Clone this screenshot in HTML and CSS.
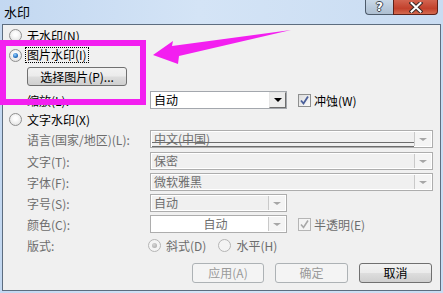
FILE: index.html
```html
<!DOCTYPE html>
<html lang="zh-CN">
<head>
    <meta charset="UTF-8">
    <title>水印</title>
    <link rel="stylesheet" href="styles.css">
</head>
<body>
    <div class="window">
        <div class="titlebar">
            <span class="title">水印</span>
            <div class="caption-buttons">
                <span class="cap-btn help">?</span>
                <span class="cap-btn close">
                    <svg width="14" height="11" viewBox="0 0 14 11">
                        <path d="M2.5 1 L11.5 9.5 M11.5 1 L2.5 9.5" stroke="#3b2a28" stroke-width="4" stroke-linecap="square"/>
                        <path d="M2.5 1 L11.5 9.5 M11.5 1 L2.5 9.5" stroke="#fff" stroke-width="2" stroke-linecap="square"/>
                    </svg>
                </span>
            </div>
        </div>

        <div class="client">
            <div class="row option first">
                <span class="radio"></span>
                <span>无水印(N)</span>
            </div>
            <div class="row option">
                <span class="radio checked"></span>
                <span class="focus">图片水印(I)</span>
            </div>
            <div class="row pick-row">
                <button class="btn pick">选择图片(P)...</button>
            </div>
            <div class="row field scale-row">
                <span class="label">缩放(L):</span>
                <div class="combo short">
                    <span class="value">自动</span>
                    <span class="drop"><i class="arrow"></i></span>
                </div>
                <span class="check checked">
                    <svg width="11" height="11" viewBox="0 0 11 11"><path d="M2 5.5 L4.5 8.5 L9 1.5" fill="none" stroke="#4a5f9a" stroke-width="1.8"/></svg>
                </span>
                <span class="check-text">冲蚀(W)</span>
            </div>
            <div class="row option text-mark">
                <span class="radio"></span>
                <span>文字水印(X)</span>
            </div>
            <div class="row field lang-row">
                <span class="label">语言(国家/地区)(L):</span>
                <div class="combo disabled">
                    <span class="value underlined">中文(中国)</span>
                    <span class="drop"><i class="arrow"></i></span>
                </div>
            </div>
            <div class="row field text-row">
                <span class="label">文字(T):</span>
                <div class="combo disabled">
                    <span class="value">保密</span>
                    <span class="drop"><i class="arrow"></i></span>
                </div>
            </div>
            <div class="row field">
                <span class="label">字体(F):</span>
                <div class="combo disabled">
                    <span class="value">微软雅黑</span>
                    <span class="drop"><i class="arrow"></i></span>
                </div>
            </div>
            <div class="row field">
                <span class="label">字号(S):</span>
                <div class="combo disabled short">
                    <span class="value">自动</span>
                    <span class="drop"><i class="arrow"></i></span>
                </div>
            </div>
            <div class="row field">
                <span class="label">颜色(C):</span>
                <div class="combo disabled short white">
                    <span class="value centered">自动</span>
                    <span class="drop"><i class="arrow"></i></span>
                </div>
                <span class="check checked disabled">
                    <svg width="11" height="11" viewBox="0 0 11 11"><path d="M2 5.5 L4.5 8.5 L9 1.5" fill="none" stroke="#a8a8a8" stroke-width="1.6"/></svg>
                </span>
                <span class="check-text">半透明(E)</span>
            </div>
            <div class="row field layout-row">
                <span class="label">版式:</span>
                <span class="radio checked disabled"></span>
                <span class="radio-text">斜式(D)</span>
                <span class="radio disabled second"></span>
                <span class="radio-text">水平(H)</span>
            </div>
            <div class="row actions">
                <button class="btn" disabled>应用(A)</button>
                <button class="btn" disabled>确定</button>
                <button class="btn">取消</button>
            </div>
        </div>
    </div>

    <!-- annotation drawn over the dialog -->
    <svg class="callout" width="443" height="293" viewBox="0 0 443 293">
        <rect x="3" y="43" width="140" height="59" fill="none" stroke="#f31ff0" stroke-width="6"/>
        <polygon points="153,55 173,41 172,46 291,30 179,56 178,64" fill="#f31ff0"/>
    </svg>
</body>
</html>
```

FILE: styles.css
```css
* {
    box-sizing: border-box;
}

body {
    margin: 0;
    width: 443px;
    height: 293px;
    overflow: hidden;
    position: relative;
    font-family: "Noto Sans CJK SC", "Noto Sans", sans-serif;
    font-size: 12px;
    color: #000;
    background: #c6dbf2;
}

.window {
    display: flex;
    flex-direction: column;
    height: 293px;
    padding: 0 2px 2px;
    background: linear-gradient(to right, #c3d8f1, #d4e4f6 45%, #c9dcf2);
}

.titlebar {
    height: 24px;
    display: flex;
    align-items: flex-start;
}

.title {
    margin: 3px 0 0 2px;
    font-size: 13px;
    line-height: 17px;
}

.caption-buttons {
    margin-left: auto;
    margin-right: 3px;
    display: flex;
}

.cap-btn {
    height: 15px;
    display: flex;
    align-items: center;
    justify-content: center;
    border: 1px solid #4d5b6b;
    border-top: none;
}

.help {
    width: 28px;
    border-right: none;
    border-radius: 0 0 0 4px;
    background: linear-gradient(#c9d8e7, #b8c9db 55%, #aebfd1);
    color: #fff;
    font-family: "DejaVu Sans", sans-serif;
    font-weight: bold;
    font-size: 12px;
    line-height: 13px;
    text-shadow: 1px 0 #3c4650, -1px 0 #3c4650, 0 1px #3c4650, 0 -1px #3c4650;
}

.close {
    width: 45px;
    border-color: #5e2119;
    border-radius: 0 0 4px 0;
    background: linear-gradient(#d26450, #c2412c 60%, #d46a4f);
}

.client {
    flex: 1;
    border: 1px solid #5d6d7f;
    background: #f0f0f0;
    padding: 0 7px 0 6px;
}

.row {
    display: flex;
    align-items: center;
    height: 18px;
    margin-top: 3px;
}

.option {
    height: 20px;
    margin-top: 0;
    gap: 5px;
}

.pick-row {
    height: 19px;
    margin-top: 2px;
    padding-left: 18px;
}

.scale-row {
    margin-top: 5px;
}

.text-mark {
    height: 18px;
    margin-top: 1px;
}

.lang-row {
    margin-top: 2px;
}

.text-row {
    margin-top: 4px;
}

.field {
    padding-left: 18px;
}

.label {
    width: 123px;
    flex: none;
    color: #6d6d6d;
    white-space: nowrap;
}

.scale-row .label {
    color: #000;
}

/* radio buttons */
.radio {
    width: 13px;
    height: 13px;
    flex: none;
    border-radius: 50%;
    border: 1px solid #8f8f8f;
    background: radial-gradient(circle at 50% 40%, #fdfdfd 20%, #dedede 90%);
    position: relative;
}

.radio.checked::after {
    content: '';
    position: absolute;
    left: 3px;
    top: 3px;
    width: 5px;
    height: 5px;
    border-radius: 50%;
    background: radial-gradient(circle at 40% 35%, #9fd3ff, #2a78c8 55%, #123f7a);
}

.radio.disabled {
    border-color: #b5b5b5;
    background: #f4f4f4;
}

.radio.checked.disabled::after {
    background: radial-gradient(circle at 40% 35%, #d6d6d6, #a3a3a3);
}

.focus {
    border: 1px dotted #000;
    padding: 0 1px;
    margin-left: -2px;
    line-height: 14px;
}

.layout-row .radio {
    margin-left: -2px;
}

.layout-row .radio.second {
    margin-left: 12px;
}

.radio-text {
    margin-left: 5px;
    color: #6d6d6d;
}

/* push buttons */
.btn {
    font: inherit;
    height: 20px;
    width: 73px;
    padding: 0;
    border: 1px solid #707070;
    border-radius: 3px;
    background: linear-gradient(#f2f2f2, #ebebeb 48%, #dddddd 52%, #cfcfcf);
    color: #000;
    line-height: 16px;
}

.btn:disabled {
    border-color: #adb2b5;
    background: #f4f4f4;
    color: #9a9a9a;
}

.pick {
    width: 100px;
    height: 19px;
}

.actions {
    height: 20px;
    margin-top: 9px;
    justify-content: flex-end;
    gap: 11px;
    padding-right: 1px;
}

.actions .btn:first-child {
    width: 72px;
}

/* combo boxes */
.combo {
    flex: 1;
    height: 18px;
    display: flex;
    border: 1px solid #a3a7ad;
    background: #fff;
}

.combo.short {
    flex: none;
    width: 137px;
}

.value {
    flex: 1;
    padding-left: 3px;
    line-height: 16px;
    white-space: nowrap;
}

.value.centered {
    text-align: center;
    padding-left: 12px;
}

.drop {
    width: 17px;
    margin: 0 0 0 auto;
    display: flex;
    align-items: center;
    justify-content: center;
    border: 1px solid;
    border-color: #e6e6e6 #6e6e6e #6e6e6e #e6e6e6;
    background: #ececec;
}

.arrow {
    width: 0;
    height: 0;
    border-left: 4px solid transparent;
    border-right: 4px solid transparent;
    border-top: 4px solid #000;
}

.combo.disabled {
    border-color: #adadad;
    box-shadow: inset 0 0 0 1px #fff;
    background: #f0f0f0;
    color: #6d6d6d;
}

.combo.disabled.white {
    background: #fff;
}

.combo.disabled .drop {
    border: none;
    border-left: 1px solid #c9c9c9;
    margin: 1px 1px 1px 0;
    background: #f4f4f4;
}

.combo.disabled .arrow {
    border-left-width: 4px;
    border-right-width: 4px;
    border-top: 3px solid #a6a6a6;
}

.value.underlined {
    position: relative;
}

.value.underlined::after {
    content: '';
    position: absolute;
    left: 1px;
    right: 0;
    bottom: 0;
    height: 3px;
    border-top: 1px solid #6d6d6d;
    border-bottom: 1px solid #6d6d6d;
}

/* check boxes */
.check {
    width: 13px;
    height: 13px;
    flex: none;
    margin-left: 11px;
    border: 1px solid #8e8f8f;
    background: linear-gradient(135deg, #dcdcdc, #fbfbfb);
    display: flex;
    align-items: center;
    justify-content: center;
}

.check.disabled {
    border-color: #b5b5b5;
    background: #f4f4f4;
}

.check-text {
    margin-left: 3px;
}

.check.disabled + .check-text {
    color: #6d6d6d;
}

/* annotation overlay */
.callout {
    position: absolute;
    left: 0;
    top: 0;
    pointer-events: none;
}
```
